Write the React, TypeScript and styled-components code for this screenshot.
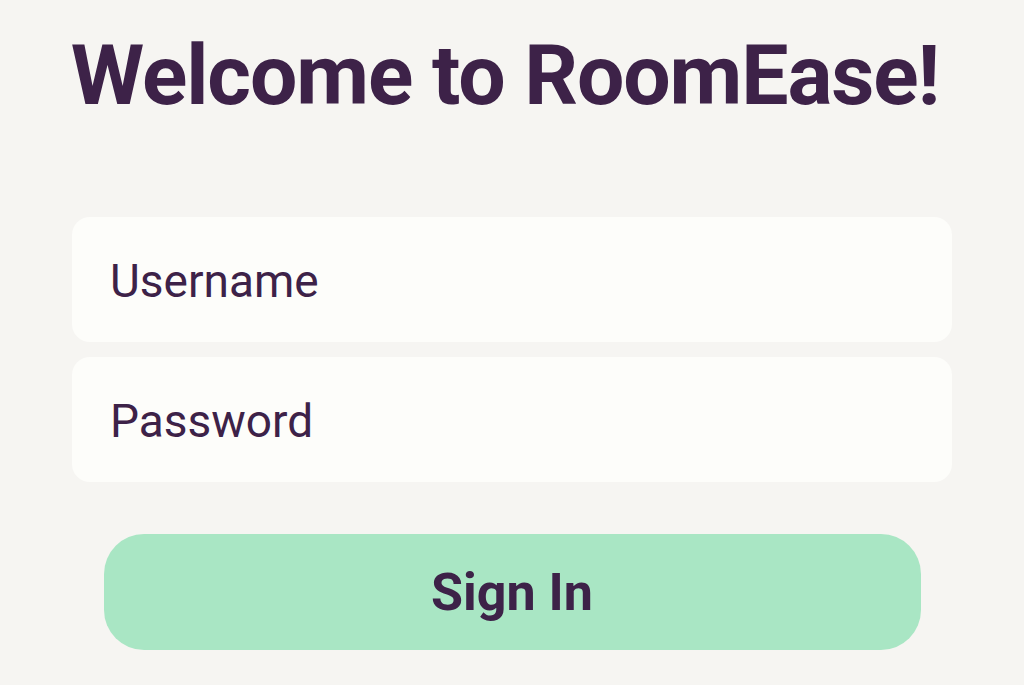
import React from "react";
import styled, { createGlobalStyle } from "styled-components";

const GlobalStyle = createGlobalStyle`
  html, body {
    margin: 0;
    padding: 0;
    background: #f6f5f2;
  }
  body {
    font-family: Roboto, "Liberation Sans", sans-serif;
  }
`;

const Page = styled.div`
  width: 1024px;
  height: 685px;
  box-sizing: border-box;
  display: flex;
  flex-direction: column;
  align-items: center;
  padding: 26px 72px 0;
  background: #f6f5f2;
  color: #3d2248;
  overflow: hidden;
`;

const Title = styled.h1`
  margin: 0;
  font-size: 84px;
  line-height: 100px;
  font-weight: 700;
  letter-spacing: -1.1px;
  white-space: nowrap;
  color: #3d2248;
  transform: translateX(-7px);
`;

const Form = styled.form`
  width: 100%;
  display: flex;
  flex-direction: column;
  align-items: center;
  margin-top: 91px;
`;

const Field = styled.input`
  width: 100%;
  height: 125px;
  box-sizing: border-box;
  border: none;
  outline: none;
  border-radius: 18px;
  background: #fdfdfa;
  padding: 2px 38px 0;
  margin-bottom: 15px;
  font-family: Roboto, "Liberation Sans", sans-serif;
  font-size: 46px;
  color: #3d2248;

  &::placeholder {
    color: #3d2248;
    opacity: 1;
  }
`;

const Button = styled.button`
  width: 817px;
  height: 116px;
  margin-top: 37px;
  border: none;
  border-radius: 40px;
  background: #a9e6c4;
  color: #3d2248;
  font-family: Roboto, "Liberation Sans", sans-serif;
  font-size: 52px;
  font-weight: 700;
  cursor: pointer;
`;

const App = () => {
  return (
    <Page>
      <GlobalStyle />
      <Title>Welcome to RoomEase!</Title>
      <Form onSubmit={(e) => e.preventDefault()}>
        <Field type="text" placeholder="Username" />
        <Field type="password" placeholder="Password" />
        <Button type="submit">Sign In</Button>
      </Form>
    </Page>
  );
};

export default App;
